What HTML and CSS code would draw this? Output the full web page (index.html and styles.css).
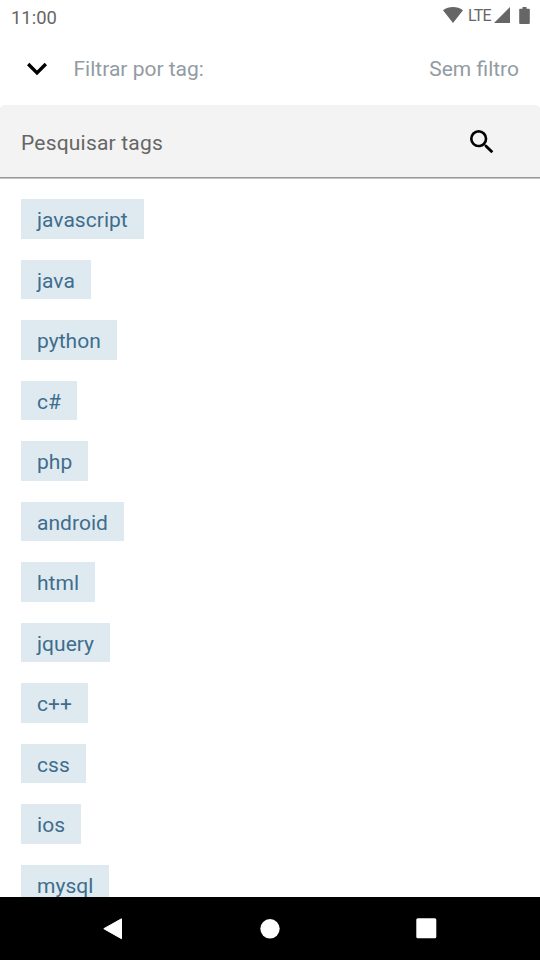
FILE: index.html
```html
<!DOCTYPE html>
<html lang="pt-BR">
<head>
<meta charset="utf-8">
<title>Tags</title>
<link rel="stylesheet" href="styles.css">
</head>
<body>
<div class="screen">
  <header class="status">
    <span class="clock">11:00</span>
    <div class="signals">
      <svg class="wifi" width="20" height="16" viewBox="0 0 20 16"><path d="M0 3.300C6-1.100 14-1.100 20 3.300L10 16z"/></svg>
      <span class="lte">LTE</span>
      <svg class="cell" width="16" height="16" viewBox="0 0 16 16"><path d="M16 0v16H0z"/></svg>
      <svg class="battery" width="11" height="17" viewBox="0 0 11 17"><path d="M3.500 0h4v1.700H10q.8 0 .8.8V16q0 1-1 1H1.200q-1 0-1-1V2.500q0-.8.8-.8h2.500z"/></svg>
    </div>
  </header>
  <div class="filter">
    <svg class="chevron" width="40" height="40" viewBox="0 0 24 24"><path d="M7.410 8.290 12 12.870l4.590-4.580L18 9.700l-6 6-6-6z"/></svg>
    <span class="label">Filtrar por tag:</span>
    <span class="value">Sem filtro</span>
  </div>
  <div class="search">
    <span class="placeholder">Pesquisar tags</span>
    <svg class="glass" width="32" height="32" viewBox="0 0 24 24"><path d="M15.500 14h-.79l-.28-.27A6.471 6.471 0 0 0 16 9.500 6.500 6.500 0 1 0 9.500 16c1.610 0 3.090-.59 4.230-1.570l.27.28v.79l5 4.990L20.490 19l-4.990-5zm-6 0C7.010 14 5 11.990 5 9.500S7.010 5 9.500 5 14 7.010 14 9.500 11.990 14 9.500 14z"/></svg>
  </div>
  <main class="tags">
    <span class="tag">javascript</span>
    <span class="tag">java</span>
    <span class="tag">python</span>
    <span class="tag">c#</span>
    <span class="tag">php</span>
    <span class="tag">android</span>
    <span class="tag">html</span>
    <span class="tag">jquery</span>
    <span class="tag">c++</span>
    <span class="tag">css</span>
    <span class="tag">ios</span>
    <span class="tag">mysql</span>
  </main>
  <nav class="navbar">
    <svg width="22" height="22" viewBox="0 0 22 22"><path d="M18.500.8v19.900L.8 10.700z" stroke="#fff" stroke-linejoin="round"/></svg>
    <svg width="20" height="20" viewBox="0 0 20 20"><circle cx="10" cy="9.800" r="9.700"/></svg>
    <svg width="21" height="21" viewBox="0 0 21 21"><rect x=".3" y=".3" width="20" height="20" rx="1.500"/></svg>
  </nav>
</div>
</body>
</html>
```
FILE: styles.css
```css
* { box-sizing: border-box; }
body { margin: 0; font-family: Roboto, sans-serif; background: #fff; }
svg { display: block; flex: none; }
.screen { width: 540px; height: 960px; display: flex; flex-direction: column; overflow: hidden; }
.status { height: 32px; flex: none; display: flex; justify-content: space-between; padding: 0 10px 0 11px; color: #666; fill: #666; }
.clock { font-size: 18.400px; line-height: 35px; letter-spacing: 0; }
.signals { display: flex; align-items: flex-start; padding-top: 7px; }
.lte { font-size: 16px; line-height: 18px; margin-left: 5px; width: 26px; letter-spacing: -.8px; }
.cell { margin-right: 9px; }
.filter { height: 73px; flex: none; display: flex; align-items: center; padding: 0 21px 0 17px; font-size: 21px; line-height: 26px; color: #939ba3; }
.filter .label, .filter .value { padding-top: 1px; }
.chevron { margin-right: 16.500px; }
.value { margin-left: auto; }
.search { height: 74px; flex: none; display: flex; align-items: center; justify-content: space-between; padding: 1px 42px 0 21px; background: #f3f3f3; border-bottom: 1px solid #c4c4c4; box-shadow: inset 0 -1px #999; border-radius: 5px 5px 0 0; }
.placeholder { font-size: 21px; padding-top: 1px; color: #666; letter-spacing: .2px; }
.tags { flex: 1; min-height: 0; overflow: hidden; display: flex; flex-direction: column; align-items: flex-start; gap: 21px; padding: 20.400px 21px 0; }
.tag { flex: none; height: 39.500px; padding: 0 16px; line-height: 42px; font-size: 21px; letter-spacing: .03px; background: #dfeaf0; color: #3e6d8e; }
.navbar { height: 63px; flex: none; display: grid; grid-template-columns: repeat(3, 156px); justify-content: center; justify-items: center; align-items: center; background: #000; fill: #fff; }
```
